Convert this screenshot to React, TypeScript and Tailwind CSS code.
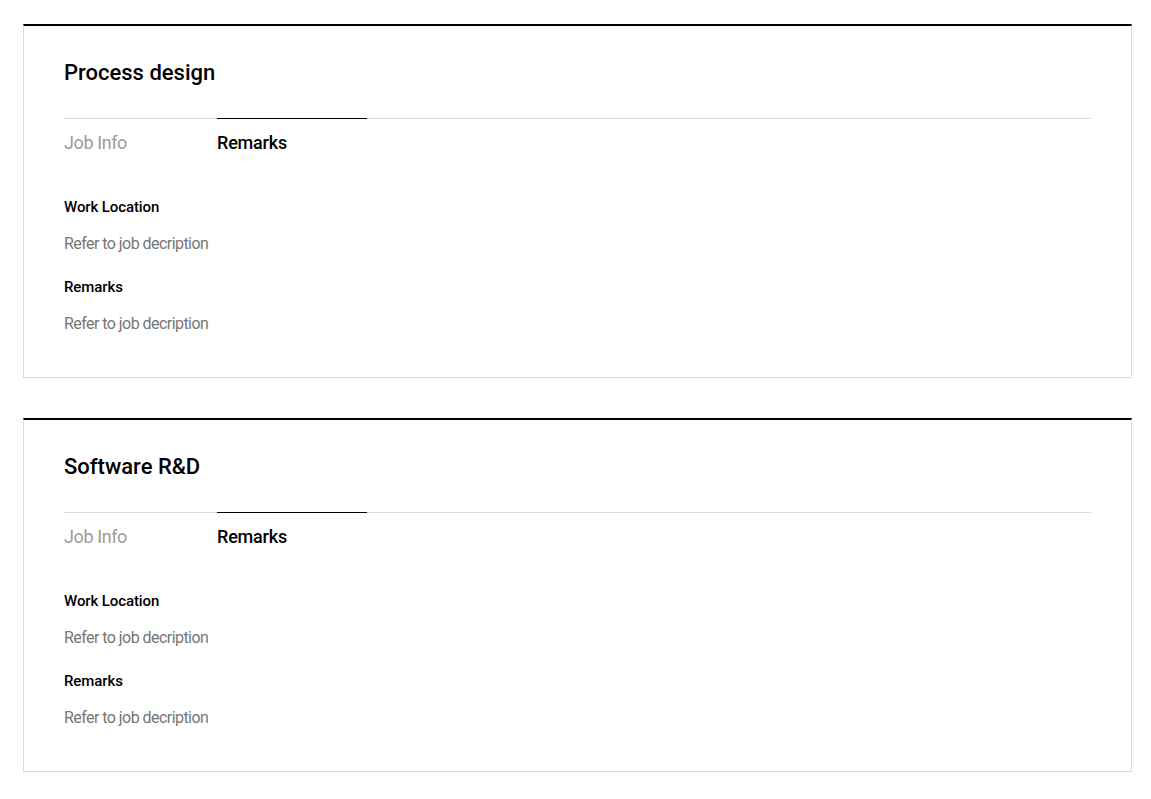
import React, { useState } from "react";

type Field = { label: string; value: string };

const jobs: { title: string; fields: Field[] }[] = [
  {
    title: "Process design",
    fields: [
      { label: "Work Location", value: "Refer to job decription" },
      { label: "Remarks", value: "Refer to job decription" },
    ],
  },
  {
    title: "Software R&D",
    fields: [
      { label: "Work Location", value: "Refer to job decription" },
      { label: "Remarks", value: "Refer to job decription" },
    ],
  },
];

const JobCard = ({ title, fields }: { title: string; fields: Field[] }) => {
  const [tab, setTab] = useState<"info" | "remarks">("remarks");

  return (
    <div className="border border-[#dcdcdc] border-t-2 border-t-black bg-white px-10 pt-[31px] pb-[41px]">
      <h2 className="text-[22px] leading-8 font-medium text-black">{title}</h2>

      <div className="mt-[29px] flex border-t border-[#dcdcdc]">
        <button
          onClick={() => setTab("info")}
          className={`-mt-px w-[153px] border-t pt-[12px] text-left text-[18px] leading-6 tracking-[-0.4px] ${
            tab === "info" ? "border-black font-medium text-black" : "border-transparent text-[#9b9b9b]"
          }`}
        >
          Job Info
        </button>
        <button
          onClick={() => setTab("remarks")}
          className={`-mt-px w-[150px] border-t pt-[12px] text-left text-[18px] leading-6 tracking-[-0.2px] ${
            tab === "remarks" ? "border-black font-medium text-black" : "border-transparent text-[#9b9b9b]"
          }`}
        >
          Remarks
        </button>
      </div>

      <div className="mt-[42px] flex flex-col gap-[21px]">
        {fields.map((f) => (
          <div key={f.label} className="flex flex-col gap-[15px]">
            <h3 className="text-[15px] leading-5 font-medium text-black tracking-[-0.1px]">{f.label}</h3>
            <p className="text-[16px] leading-6 text-[#767676] tracking-[-0.55px]">{f.value}</p>
          </div>
        ))}
      </div>
    </div>
  );
};

export default function App() {
  return (
    <div className="min-h-screen bg-white pt-6 pl-[23px] pr-[19px] font-['Roboto',sans-serif]">
      <div className="flex flex-col gap-10">
        {jobs.map((j) => (
          <JobCard key={j.title} title={j.title} fields={j.fields} />
        ))}
      </div>
    </div>
  );
}
